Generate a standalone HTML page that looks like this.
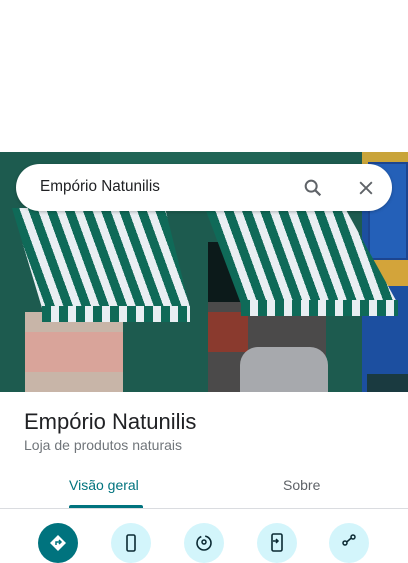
<!DOCTYPE html>
<html><head><meta charset="utf-8"><style>
*{margin:0;padding:0;box-sizing:border-box}
body{width:408px;height:544px;background:#fff;font-family:"Liberation Sans",Roboto,sans-serif;position:relative;overflow:hidden}
.ph{position:absolute;left:0;top:152px;width:408px;height:240px;background:#1e5a4e;overflow:hidden}
.a{position:absolute}
.str{background:repeating-linear-gradient(70deg,#0f6a58 0 9px,#e8eef2 9px 17px)}
.val{background:repeating-linear-gradient(90deg,#0f6a58 0 9px,#e8eef2 9px 17px)}
.search{position:absolute;left:16px;top:164px;width:376px;height:47px;background:#fff;border-radius:24px;box-shadow:0 1px 3px rgba(0,0,0,.25)}
.search span{position:absolute;left:24px;top:14px;font-size:15.3px;color:#202124}
.circ{position:absolute;top:523px;width:40px;height:40px;border-radius:50%;background:#d3f5fb}
.circ svg{position:absolute;left:10px;top:10px}
</style></head><body>
<div class="ph">
 <div class="a" style="left:0;top:0;width:408px;height:240px;background:#1d5b4f"></div>
 <div class="a" style="left:100px;top:0;width:190px;height:60px;background:#216556"></div>
 <div class="a" style="left:362px;top:0;width:46px;height:240px;background:#1c4fa0"></div>
 <div class="a" style="left:362px;top:0;width:46px;height:12px;background:#c9a43a"></div>
 <div class="a" style="left:368px;top:10px;width:40px;height:98px;background:#2460b8;border:2px solid #1c4590"></div>
 <div class="a" style="left:362px;top:108px;width:46px;height:26px;background:#d3a43a"></div>
 <div class="a" style="left:25px;top:160px;width:98px;height:80px;background:#c8b5a8"></div>
 <div class="a" style="left:25px;top:180px;width:98px;height:40px;background:#d9a49a"></div>
 <div class="a" style="left:208px;top:150px;width:118px;height:90px;background:#4b4a4a"></div>
 <div class="a" style="left:208px;top:160px;width:40px;height:40px;background:#8a3a2e"></div>
 <div class="a" style="left:240px;top:195px;width:88px;height:45px;background:#a7a9ad;border-radius:18px 18px 0 0"></div>
 <div class="a" style="left:208px;top:90px;width:150px;height:60px;background:#0c1a1a"></div>
 <div class="a str" style="left:12px;top:56px;width:178px;height:106px;clip-path:polygon(0 0,153px 0,178px 100px,30px 100px)"></div>
 <div class="a val" style="left:42px;top:154px;width:148px;height:16px"></div>
 <div class="a str" style="left:205px;top:56px;width:193px;height:100px;clip-path:polygon(0 0,140px 0,193px 96px,36px 96px)"></div>
 <div class="a val" style="left:241px;top:148px;width:157px;height:16px"></div>
 <div class="a" style="left:367px;top:222px;width:41px;height:18px;background:#1a3a40"></div>
</div>
<div class="search"><span>Empório Natunilis</span>
 <svg style="position:absolute;left:286px;top:13px" width="22" height="22" viewBox="0 0 24 24"><circle cx="10" cy="10" r="6" fill="none" stroke="#5f6368" stroke-width="2.2"/><path d="M14.5 14.5L20 20" stroke="#5f6368" stroke-width="2.4"/></svg>
 <svg style="position:absolute;left:340px;top:14px" width="20" height="20" viewBox="0 0 24 24"><path d="M5 5L19 19M19 5L5 19" stroke="#5f6368" stroke-width="2.2"/></svg>
</div>
<div style="position:absolute;left:24px;top:409px;font-size:22px;color:#202124">Empório Natunilis</div>
<div style="position:absolute;left:24px;top:437px;font-size:14px;color:#70757a">Loja de produtos naturais</div>
<div style="position:absolute;left:69px;top:477px;font-size:14px;color:#00737e">Visão geral</div>
<div style="position:absolute;left:283px;top:477px;font-size:14px;color:#5f6368">Sobre</div>
<div style="position:absolute;left:0;top:508px;width:408px;height:1px;background:#dadce0"></div>
<div style="position:absolute;left:69px;top:505px;width:74px;height:3px;background:#00737e;border-radius:2px 2px 0 0"></div>
<div class="circ" style="left:38px;background:#00737e"><svg width="20" height="20" viewBox="0 0 20 20"><path d="M10 2L18 10L10 18L2 10Z" fill="#fff"/><path d="M8 12V9h4M11 7l2 2-2 2" fill="none" stroke="#00737e" stroke-width="1.5"/></svg></div>
<div class="circ" style="left:111px"><svg width="20" height="20" viewBox="0 0 20 20"><rect x="6" y="2" width="8" height="16" rx="1.5" fill="none" stroke="#0b2a33" stroke-width="1.6"/></svg></div>
<div class="circ" style="left:184px"><svg width="20" height="20" viewBox="0 0 20 20"><circle cx="10" cy="10" r="7" fill="none" stroke="#0b2a33" stroke-width="1.6" stroke-dasharray="30 4"/><circle cx="10" cy="9" r="2" fill="none" stroke="#0b2a33" stroke-width="1.5"/></svg></div>
<div class="circ" style="left:257px"><svg width="20" height="20" viewBox="0 0 20 20"><rect x="5" y="1" width="10" height="17" rx="1.5" fill="none" stroke="#0b2a33" stroke-width="1.6"/><path d="M6 8h5M9 6l2 2-2 2" fill="none" stroke="#0b2a33" stroke-width="1.5"/></svg></div>
<div class="circ" style="left:329px"><svg width="20" height="20" viewBox="0 0 20 20"><circle cx="14" cy="4" r="2" fill="none" stroke="#0b2a33" stroke-width="1.5"/><circle cx="6" cy="10" r="2" fill="none" stroke="#0b2a33" stroke-width="1.5"/><path d="M12.3 5L7.7 9" stroke="#0b2a33" stroke-width="1.5"/></svg></div>
</body></html>
